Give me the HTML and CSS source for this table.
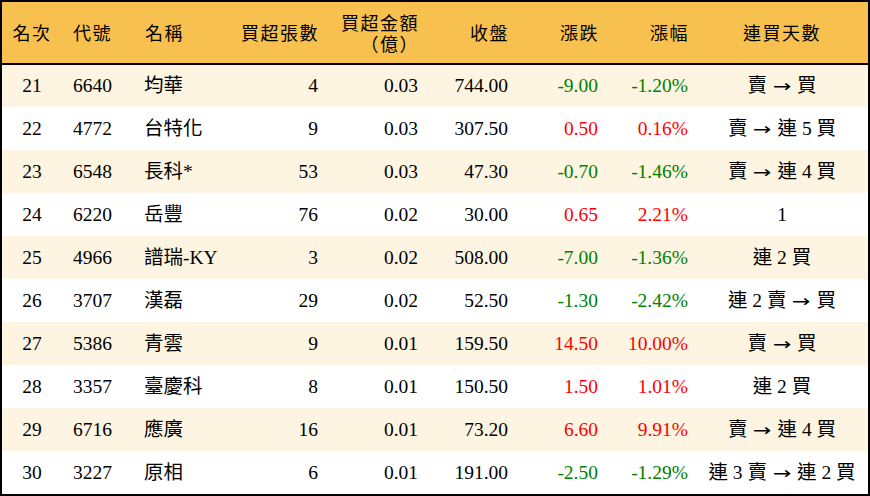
FILE: index.html
```html
<!DOCTYPE html>
<html lang="zh-Hant">
<head>
<meta charset="utf-8">
<link rel="stylesheet" href="styles.css">
</head>
<body>
<div class="frame">
<table class="grid">
<colgroup>
<col class="c1"><col class="c2"><col class="c3"><col class="c4"><col class="c5"><col class="c6"><col class="c7"><col class="c8"><col class="c9">
</colgroup>
<thead>
<tr>
<th class="ctr">名次</th><th class="lft">代號</th><th class="lft">名稱</th><th class="rgt">買超張數</th><th class="rgt">買超金額<br>（億）</th><th class="rgt">收盤</th><th class="rgt">漲跌</th><th class="rgt">漲幅</th><th class="ctr">連買天數</th>
</tr>
</thead>
<tbody>
<tr><td class="ctr">21</td><td class="lft">6640</td><td class="lft">均華</td><td class="rgt">4</td><td class="rgt">0.03</td><td class="rgt">744.00</td><td class="rgt dn">-9.00</td><td class="rgt dn">-1.20%</td><td class="ctr">賣 <span class="ar">→</span> 買</td></tr>
<tr><td class="ctr">22</td><td class="lft">4772</td><td class="lft">台特化</td><td class="rgt">9</td><td class="rgt">0.03</td><td class="rgt">307.50</td><td class="rgt up">0.50</td><td class="rgt up">0.16%</td><td class="ctr">賣 <span class="ar">→</span> 連 5 買</td></tr>
<tr><td class="ctr">23</td><td class="lft">6548</td><td class="lft">長科*</td><td class="rgt">53</td><td class="rgt">0.03</td><td class="rgt">47.30</td><td class="rgt dn">-0.70</td><td class="rgt dn">-1.46%</td><td class="ctr">賣 <span class="ar">→</span> 連 4 買</td></tr>
<tr><td class="ctr">24</td><td class="lft">6220</td><td class="lft">岳豐</td><td class="rgt">76</td><td class="rgt">0.02</td><td class="rgt">30.00</td><td class="rgt up">0.65</td><td class="rgt up">2.21%</td><td class="ctr">1</td></tr>
<tr><td class="ctr">25</td><td class="lft">4966</td><td class="lft">譜瑞-KY</td><td class="rgt">3</td><td class="rgt">0.02</td><td class="rgt">508.00</td><td class="rgt dn">-7.00</td><td class="rgt dn">-1.36%</td><td class="ctr">連 2 買</td></tr>
<tr><td class="ctr">26</td><td class="lft">3707</td><td class="lft">漢磊</td><td class="rgt">29</td><td class="rgt">0.02</td><td class="rgt">52.50</td><td class="rgt dn">-1.30</td><td class="rgt dn">-2.42%</td><td class="ctr">連 2 賣 <span class="ar">→</span> 買</td></tr>
<tr><td class="ctr">27</td><td class="lft">5386</td><td class="lft">青雲</td><td class="rgt">9</td><td class="rgt">0.01</td><td class="rgt">159.50</td><td class="rgt up">14.50</td><td class="rgt up">10.00%</td><td class="ctr">賣 <span class="ar">→</span> 買</td></tr>
<tr><td class="ctr">28</td><td class="lft">3357</td><td class="lft">臺慶科</td><td class="rgt">8</td><td class="rgt">0.01</td><td class="rgt">150.50</td><td class="rgt up">1.50</td><td class="rgt up">1.01%</td><td class="ctr">連 2 買</td></tr>
<tr><td class="ctr">29</td><td class="lft">6716</td><td class="lft">應廣</td><td class="rgt">16</td><td class="rgt">0.01</td><td class="rgt">73.20</td><td class="rgt up">6.60</td><td class="rgt up">9.91%</td><td class="ctr">賣 <span class="ar">→</span> 連 4 買</td></tr>
<tr><td class="ctr">30</td><td class="lft">3227</td><td class="lft">原相</td><td class="rgt">6</td><td class="rgt">0.01</td><td class="rgt">191.00</td><td class="rgt dn">-2.50</td><td class="rgt dn">-1.29%</td><td class="ctr">連 3 賣 <span class="ar">→</span> 連 2 買</td></tr>
</tbody>
</table>
</div>
</body>
</html>
```

FILE: styles.css
```css
html, body {
  margin: 0;
  padding: 0;
  background: #ffffff;
}
.frame {
  width: 870px;
  height: 496px;
  box-sizing: border-box;
  border: 2px solid #000;
  overflow: hidden;
}
.grid {
  width: 866px;
  border-collapse: collapse;
  table-layout: fixed;
  font-family: "Liberation Serif", "Noto Sans CJK TC", serif;
  font-size: 19.5px;
  color: #000;
}
.c1 { width: 60px; }
.c2 { width: 72px; }
.c3 { width: 92px; }
.c4 { width: 100px; }
.c5 { width: 100px; }
.c6 { width: 90px; }
.c7 { width: 90px; }
.c8 { width: 90px; }
.c9 { width: 172px; }
thead tr {
  background: #f8c04e;
  height: 62px;
  border-bottom: 2px solid #000;
}
th {
  font-weight: normal;
  font-size: 18px;
  letter-spacing: 1.5px;
  line-height: 21px;
  padding: 0;
  font-family: "Noto Sans CJK TC", serif;
}
tbody tr {
  height: 43px;
}
tbody tr:nth-child(odd) {
  background: #fdf5e1;
}
td {
  padding: 0;
  white-space: nowrap;
  line-height: 22px;
}
.ctr { text-align: center; }
.lft { text-align: left; padding-left: 11px; }
.rgt { text-align: right; padding-right: 8px; }
th.rgt { padding-right: 7px; }
td.lft:nth-child(3) { padding-left: 10px; }
.ar {
  font-family: "DejaVu Sans", sans-serif;
  font-size: 17px;
  display: inline-block;
  transform: scaleX(1.3);
  padding: 0 3px;
}
.up { color: #ff0000; }
.dn { color: #008000; }
```
